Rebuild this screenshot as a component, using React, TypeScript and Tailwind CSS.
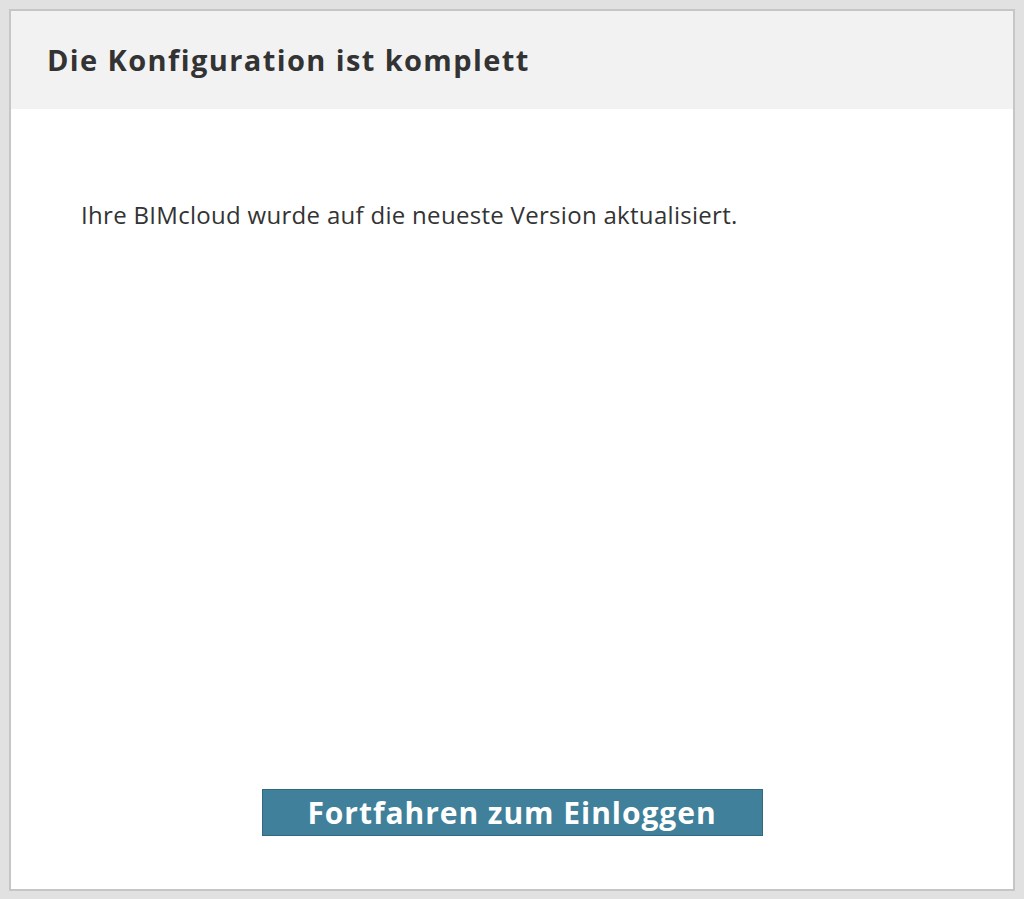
export default function App() {
  return (
    <div className="min-h-[899px] bg-[#e1e1e1] p-[9px] font-['Open_Sans',sans-serif]">
      <div className="flex h-[882px] flex-col border-2 border-[#c6c6c6] bg-white">
        <div className="flex h-[98px] items-center bg-[#f2f2f2] px-[36px]">
          <h1 className="text-[29px] font-bold tracking-[1.4px] text-[#333333]">Die Konfiguration ist komplett</h1>
        </div>
        <div className="flex flex-1 flex-col px-[70px] pt-[88px]">
          <p className="text-[24px] tracking-[0.3px] text-[#333333]">Ihre BIMcloud wurde auf die neueste Version aktualisiert.</p>
        </div>
        <div className="flex justify-center pb-[53px]">
          <button className="h-[47px] w-[501px] border border-[#2f6a82] bg-[#40809a] text-[30px] font-bold leading-none tracking-[0.95px] text-white">
            Fortfahren zum Einloggen
          </button>
        </div>
      </div>
    </div>
  );
}
